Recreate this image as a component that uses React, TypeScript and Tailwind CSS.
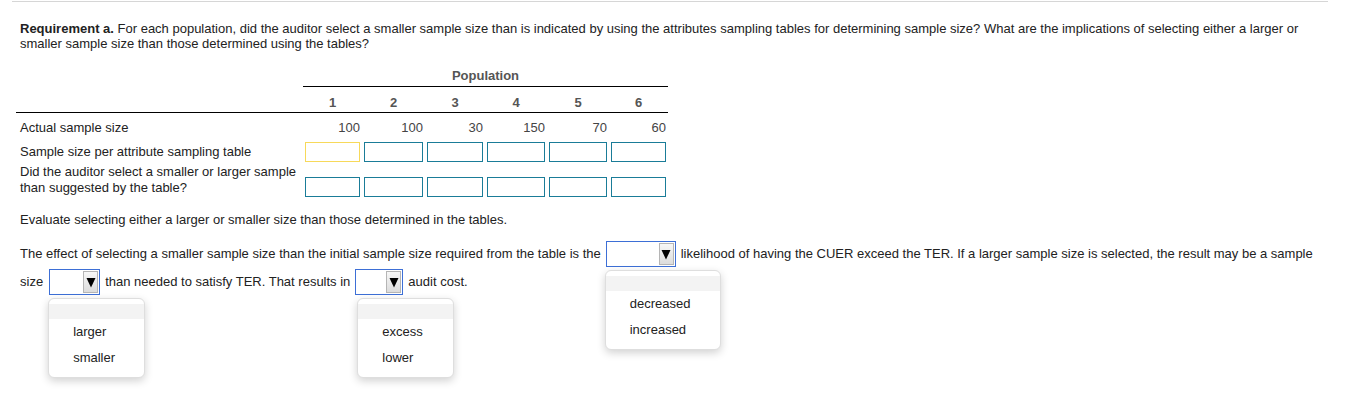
import { ReactNode } from 'react'

const COLS = [
  { w: 'w-[59px]', value: 100 },
  { w: 'w-[63px]', value: 100 },
  { w: 'w-[60px]', value: 30 },
  { w: 'w-[62px]', value: 150 },
  { w: 'w-[62px]', value: 70 },
  { w: 'w-[59px]', value: 60 },
]

function Cell({ w, children, className = '' }: { w: string; children?: ReactNode; className?: string }) {
  return <div className={`${w} shrink-0 px-[2px] ${className}`}>{children}</div>
}

function AnswerBox({ active = false }: { active?: boolean }) {
  return (
    <div
      className={`h-[20px] w-full border ${active ? 'border-[#f7d95a]' : 'border-[#1a7c98]'} bg-white`}
    />
  )
}

function Select({
  w,
  menu,
  menuW,
  menuLeft = 'left-[-2px]',
}: {
  w: string
  menu?: string[]
  menuW?: string
  menuLeft?: string
}) {
  return (
    <div className={`relative ${w} h-[26px] shrink-0 border border-[#3d6fd6] bg-white`}>
      <div className="absolute right-[1px] top-[1px] flex h-[22px] w-[15px] items-center justify-center border border-[#b5b5b5] bg-gradient-to-b from-[#f7f7f7] to-[#dcdcdc]">
        <svg width="10" height="11" viewBox="0 0 10 11">
          <polygon points="0.5,1 9.5,1 5,10.5" fill="#000" />
        </svg>
      </div>
      {menu && (
        <div
          className={`absolute ${menuLeft} top-[28px] z-10 ${menuW} rounded-[6px] border border-[#dedede] bg-white pb-[6px] pt-[5px] shadow-[0_3px_8px_rgba(0,0,0,0.18)]`}
        >
          <div className="h-[15px] bg-[#f3f3f3]" />
          {menu.map((m) => (
            <div key={m} className="flex h-[26px] items-center pl-[24px] text-[13px] text-[#222]">
              {m}
            </div>
          ))}
        </div>
      )}
    </div>
  )
}

export default function App() {
  return (
    <div
      className="min-h-[410px] bg-white text-[13px] text-[#222]"
      style={{ fontFamily: '"Liberation Sans", Arial, sans-serif' }}
    >
      <div className="ml-[12px] mt-[1px] h-px w-[1316px] bg-[#d6d6d6]" />

      <div className="pl-[20px] pt-[19px] leading-[15px]">
        <p>
          <span className="font-bold">Requirement a.</span> For each population, did the auditor select a smaller
          sample size than is indicated by using the attributes sampling tables for determining sample size? What are
          the implications of selecting either a larger or
          <br />
          smaller sample size than those determined using the tables?
        </p>
      </div>

      {/* Table */}
      <div className="ml-[16px] mt-[17px] w-[652px]">
        <div className="flex">
          <div className="w-[287px] shrink-0" />
          <div className="flex-1 border-b border-black pb-[2px] text-center leading-[16px] font-bold text-[#555]">
            Population
          </div>
        </div>
        <div className="flex border-b border-black pb-[1px] pt-[8px] leading-[16px]">
          <div className="w-[287px] shrink-0" />
          {COLS.map((c, i) => (
            <Cell key={i} w={c.w} className="text-center font-bold text-[#555]">
              {i + 1}
            </Cell>
          ))}
        </div>
        <div className="flex pt-[7px] leading-[16px]">
          <div className="w-[287px] shrink-0 pl-[4px]">Actual sample size</div>
          {COLS.map((c, i) => (
            <Cell key={i} w={c.w} className="text-right text-[#444]">
              {c.value}
            </Cell>
          ))}
        </div>
        <div className="mt-[6px] flex items-center">
          <div className="w-[287px] shrink-0 pl-[4px] leading-[16px]">Sample size per attribute sampling table</div>
          {COLS.map((c, i) => (
            <Cell key={i} w={c.w}>
              <AnswerBox active={i === 0} />
            </Cell>
          ))}
        </div>
        <div className="mt-[2px] flex items-end">
          <div className="w-[287px] shrink-0 pb-[1px] pl-[4px] leading-[16px]">
            Did the auditor select a smaller or larger sample
            <br />
            than suggested by the table?
          </div>
          {COLS.map((c, i) => (
            <Cell key={i} w={c.w}>
              <AnswerBox />
            </Cell>
          ))}
        </div>
      </div>

      <p className="mt-[15px] pl-[20px] leading-[16px]">
        Evaluate selecting either a larger or smaller size than those determined in the tables.
      </p>

      <div className="mt-[13px] flex flex-col gap-[2px] pl-[20px]">
        <div className="flex h-[26px] items-center gap-[5px] whitespace-nowrap">
          <span>
            The effect of selecting a smaller sample size than the initial sample size required from the table is the
          </span>
          <Select w="w-[70px]" menu={['decreased', 'increased']} menuW="w-[116px]" menuLeft="left-[-2px]" />
          <span>
            likelihood of having the CUER exceed the TER. If a larger sample size is selected, the result may be a sample
          </span>
        </div>
        <div className="flex h-[26px] items-center gap-[5px] whitespace-nowrap">
          <span className="mr-[1px]">size</span>
          <Select w="w-[51px]" menu={['larger', 'smaller']} menuW="w-[97px]" menuLeft="left-[-2px]" />
          <span>than needed to satisfy TER. That results in</span>
          <Select w="w-[48px]" menu={['excess', 'lower']} menuW="w-[97px]" menuLeft="left-[1px]" />
          <span>audit cost.</span>
        </div>
      </div>
    </div>
  )
}
